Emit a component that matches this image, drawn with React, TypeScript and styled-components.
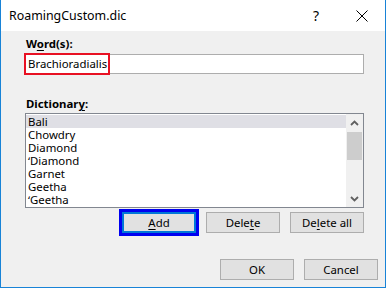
import styled, { createGlobalStyle } from 'styled-components';

const GlobalStyle = createGlobalStyle`
  html, body {
    margin: 0;
    padding: 0;
    background: #ffffff;
  }
  * {
    box-sizing: border-box;
  }
`;

const uiFont = `"Segoe UI", "Noto Sans", "Open Sans", sans-serif`;

const Window = styled.div`
  width: 386px;
  height: 288px;
  display: flex;
  flex-direction: column;
  border: 1px solid #1883d7;
  border-top: none;
  font-family: ${uiFont};
  font-size: 11.4px;
  color: #000;
  background: #f0f0f0;
`;

const TitleBar = styled.div`
  height: 31px;
  flex-shrink: 0;
  display: flex;
  align-items: center;
  padding-left: 8px;
  background: #ffffff;
`;

const Title = styled.div`
  flex: 1;
  font-size: 12.4px;
  padding-bottom: 1px;
`;

const TitleButton = styled.div`
  width: 46px;
  height: 31px;
  display: flex;
  align-items: center;
  justify-content: center;
  font-size: 14px;
`;

const Body = styled.div`
  flex: 1;
  display: flex;
  flex-direction: column;
  padding: 5px 21px 0 23px;
`;

const Label = styled.div<{ $gap: number }>`
  height: 16px;
  line-height: 16px;
  margin-top: ${p => p.$gap}px;
  padding-left: 2px;
  font-weight: 700;
`;

const Key = styled.span`
  text-decoration: underline;
  text-underline-offset: 2px;
`;

const InputWrap = styled.div`
  position: relative;
  margin-top: 2px;
`;

const TextInput = styled.div`
  height: 20px;
  border: 1px solid #adadad;
  background: #fff;
  line-height: 18px;
  padding-left: 3px;
`;

const Highlight = styled.div<{ $color: string; $w: number; $h: number; $t: number; $l: number }>`
  position: absolute;
  top: ${p => p.$t}px;
  left: ${p => p.$l}px;
  width: ${p => p.$w}px;
  height: ${p => p.$h}px;
  border: ${p => (p.$color === 'red' ? '2px solid #e81123' : '3px solid #0000f0')};
  pointer-events: none;
`;

const ListBox = styled.div`
  margin-top: 1px;
  margin-left: 1px;
  height: 95px;
  border: 1px solid #828790;
  background: #fff;
  display: flex;
`;

const Items = styled.div`
  flex: 1;
  padding: 1px 0 0 0;
`;

const Item = styled.div<{ $selected?: boolean }>`
  height: 13px;
  line-height: 13px;
  padding-left: 2px;
  background: ${p => (p.$selected ? '#dfdfe5' : 'transparent')};
`;

const ScrollBar = styled.div`
  width: 17px;
  background: #f0f0f0;
  display: flex;
  flex-direction: column;
`;

const ArrowBox = styled.div`
  height: 17px;
  display: flex;
  align-items: center;
  justify-content: center;
`;

const Thumb = styled.div`
  height: 28px;
  margin: 1px 1px 0 1px;
  background: #cdcdcd;
`;

const Track = styled.div`
  flex: 1;
`;

const ButtonRow = styled.div<{ $gap: number; $right: number }>`
  display: flex;
  justify-content: flex-end;
  gap: 10px;
  margin-top: ${p => p.$gap}px;
  margin-right: ${p => p.$right}px;
`;

const Button = styled.div<{ $focused?: boolean }>`
  position: relative;
  width: 74px;
  height: 21px;
  border: ${p => (p.$focused ? '2px solid #0078d7' : '1px solid #adadad')};
  background: #e1e1e1;
  display: flex;
  align-items: center;
  justify-content: center;
  padding-bottom: 1px;
`;

const words = ['Bali', 'Chowdry', 'Diamond', '\u02BBDiamond', 'Garnet', 'Geetha', '\u02BBGeetha'];

const Chevron = ({ up }: { up?: boolean }) => (
  <svg width="9" height="6" viewBox="0 0 9 6">
    <polyline
      points={up ? '1,5 4.5,1.5 8,5' : '1,1 4.5,4.5 8,1'}
      fill="none"
      stroke="#606060"
      strokeWidth="1.8"
    />
  </svg>
);

const App = () => {
  return (
    <>
      <GlobalStyle />
      <Window>
        <TitleBar>
          <Title>RoamingCustom.dic</Title>
          <TitleButton>?</TitleButton>
          <TitleButton>
            <svg width="12" height="12" viewBox="0 0 12 12">
              <path d="M0.5 0.5 L11.5 11.5 M11.5 0.5 L0.5 11.5" stroke="#000" strokeWidth="1" />
            </svg>
          </TitleButton>
        </TitleBar>
        <Body>
          <Label $gap={0}>
            W<Key>o</Key>rd(s):
          </Label>
          <InputWrap>
            <TextInput>Brachioradialis</TextInput>
            <Highlight $color="red" $t={-1} $l={0} $w={86} $h={22} />
          </InputWrap>
          <Label $gap={22}>
            Dictionar<Key>y</Key>:
          </Label>
          <ListBox>
            <Items>
              {words.map((w, i) => (
                <Item key={w} $selected={i === 0}>
                  {w}
                </Item>
              ))}
            </Items>
            <ScrollBar>
              <ArrowBox>
                <Chevron up />
              </ArrowBox>
              <Thumb />
              <Track />
              <ArrowBox>
                <Chevron />
              </ArrowBox>
            </ScrollBar>
          </ListBox>
          <ButtonRow $gap={4} $right={0}>
            <Button $focused>
              <span>
                <Key>A</Key>dd
              </span>
              <Highlight $color="blue" $t={-5} $l={-5} $w={80} $h={27} />
            </Button>
            <Button>
              <span>
                Dele<Key>t</Key>e
              </span>
            </Button>
            <Button>
              <span>
                De<Key>l</Key>ete all
              </span>
            </Button>
          </ButtonRow>
          <ButtonRow $gap={26} $right={-14}>
            <Button>OK</Button>
            <Button>Cancel</Button>
          </ButtonRow>
        </Body>
      </Window>
    </>
  );
};

export default App;
